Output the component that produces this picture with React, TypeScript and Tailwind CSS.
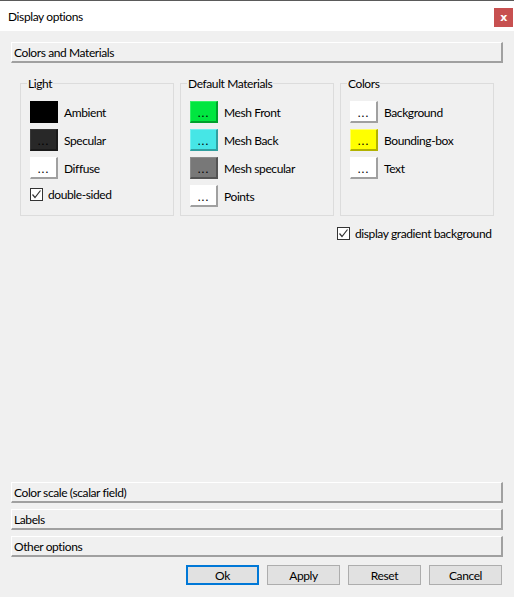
import React from "react";

const font = { fontFamily: 'Lato, "Noto Sans", "Liberation Sans", sans-serif' };

type Swatch = { label: string; bg: string; edge: string };

const WHITE_EDGE = "border-t-white border-l-white border-b-[#a0a0a0] border-r-[#a0a0a0]";

const LIGHT: Swatch[] = [
  { label: "Ambient", bg: "bg-[#000000]", edge: "border-t-[#000000] border-l-[#000000] border-b-[#000000] border-r-[#000000]" },
  { label: "Specular", bg: "bg-[#282828]", edge: "border-t-[#383838] border-l-[#383838] border-b-[#1a1a1a] border-r-[#1a1a1a]" },
  { label: "Diffuse", bg: "bg-white", edge: WHITE_EDGE },
];

const MATERIALS: Swatch[] = [
  { label: "Mesh Front", bg: "bg-[#00e640]", edge: "border-t-[#33f066] border-l-[#33f066] border-b-[#00a02c] border-r-[#00a02c]" },
  { label: "Mesh Back", bg: "bg-[#46e6e6]", edge: "border-t-[#70f0f0] border-l-[#70f0f0] border-b-[#30a0a0] border-r-[#30a0a0]" },
  { label: "Mesh specular", bg: "bg-[#787878]", edge: "border-t-[#8c8c8c] border-l-[#8c8c8c] border-b-[#545454] border-r-[#545454]" },
  { label: "Points", bg: "bg-white", edge: WHITE_EDGE },
];

const COLORS: Swatch[] = [
  { label: "Background", bg: "bg-white", edge: WHITE_EDGE },
  { label: "Bounding-box", bg: "bg-[#ffff00]", edge: "border-t-[#ffff66] border-l-[#ffff66] border-b-[#b2b200] border-r-[#b2b200]" },
  { label: "Text", bg: "bg-white", edge: WHITE_EDGE },
];

function SwatchRow({ s }: { s: Swatch }) {
  return (
    <div className="flex items-center gap-[6px] h-[22px]">
      <div className={`w-[28px] h-[22px] border-t border-l border-b-2 border-r-2 flex items-end justify-center ${s.bg} ${s.edge}`}>
        <span className="text-[12px] leading-[16px] tracking-[1px] text-black">...</span>
      </div>
      <span className="text-[12px] leading-[16px] text-black whitespace-nowrap pt-[2px]">{s.label}</span>
    </div>
  );
}

function Check({ label }: { label: string }) {
  return (
    <div className="flex items-center gap-[5px] h-[14px]">
      <div className="w-[13px] h-[13px] border border-[#333333] bg-white flex items-center justify-center">
        <svg width="11" height="11" viewBox="0 0 11 11">
          <polyline points="1.5,5.5 4,8.5 9.5,1.5" fill="none" stroke="#333333" strokeWidth="1.2" />
        </svg>
      </div>
      <span className="text-[12px] leading-[16px] text-black whitespace-nowrap pt-[1px]">{label}</span>
    </div>
  );
}

function Group({ title, children }: { title: string; children: React.ReactNode }) {
  return (
    <fieldset className="w-[154px] border border-[#dcdcdc] pl-[9px] pr-2 pt-[9px] pb-[8px]">
      <legend className="-ml-[3px] px-[1px] pt-[2px] text-[12px] leading-[16px] text-black">{title}</legend>
      <div className="flex flex-col gap-[6px]">{children}</div>
    </fieldset>
  );
}

function Bar({ label }: { label: string }) {
  return (
    <div className="h-[21px] w-[492px] border-t border-l border-b-2 border-r-2 border-t-white border-l-white border-b-[#a0a0a0] border-r-[#a0a0a0] bg-[#f0f0f0] flex items-center pl-[2px]">
      <span className="text-[12px] leading-[16px] text-black pt-[2px]">{label}</span>
    </div>
  );
}

function DialogButton({ label, primary }: { label: string; primary?: boolean }) {
  return (
    <div
      className={`w-[73px] h-[20px] bg-[#e1e1e1] flex items-center justify-center text-[12px] leading-[16px] text-black ${
        primary ? "border-2 border-[#0078d7]" : "border border-[#adadad]"
      }`}
    >
      <span className="pt-[1px]">{label}</span>
    </div>
  );
}

export default function App() {
  return (
    <div className="w-[514px] h-[597px] bg-[#f0f0f0] flex flex-col overflow-hidden tracking-[-0.4px]" style={font}>
      {/* Title bar */}
      <div className="h-[31px] border-t border-[#5a5a5a] bg-white flex items-start justify-between">
        <span className="ml-[8px] mt-[8px] text-[12px] leading-[16px] text-black">Display options</span>
        <div className="mt-[7px] mr-[1px] w-[19px] h-[19px] bg-[#c75050] flex items-center justify-center">
          <span className="text-white text-[11px] leading-none font-bold" style={{ fontFamily: '"DejaVu Sans", sans-serif' }}>x</span>
        </div>
      </div>

      <div className="flex-1 flex flex-col px-[11px] pt-[11px] pb-[12px]">
        <Bar label="Colors and Materials" />

        {/* Groups */}
        <div className="mt-[11px] ml-[9px] flex gap-[6px] items-stretch">
          <Group title="Light">
            {LIGHT.map((s) => (
              <SwatchRow key={s.label} s={s} />
            ))}
            <div className="pt-[2px]">
              <Check label="double-sided" />
            </div>
          </Group>
          <Group title="Default Materials">
            {MATERIALS.map((s) => (
              <SwatchRow key={s.label} s={s} />
            ))}
          </Group>
          <Group title="Colors">
            {COLORS.map((s) => (
              <SwatchRow key={s.label} s={s} />
            ))}
          </Group>
        </div>

        <div className="mt-[10px] ml-[326px]">
          <Check label="display gradient background" />
        </div>

        <div className="flex-1" />

        {/* Collapsed sections */}
        <div className="flex flex-col gap-[6px]">
          <Bar label="Color scale (scalar field)" />
          <Bar label="Labels" />
          <Bar label="Other options" />
        </div>

        <div className="mt-[8px] flex justify-end gap-[8px] pr-[1px]">
          <DialogButton label="Ok" primary />
          <DialogButton label="Apply" />
          <DialogButton label="Reset" />
          <DialogButton label="Cancel" />
        </div>
      </div>
    </div>
  );
}
